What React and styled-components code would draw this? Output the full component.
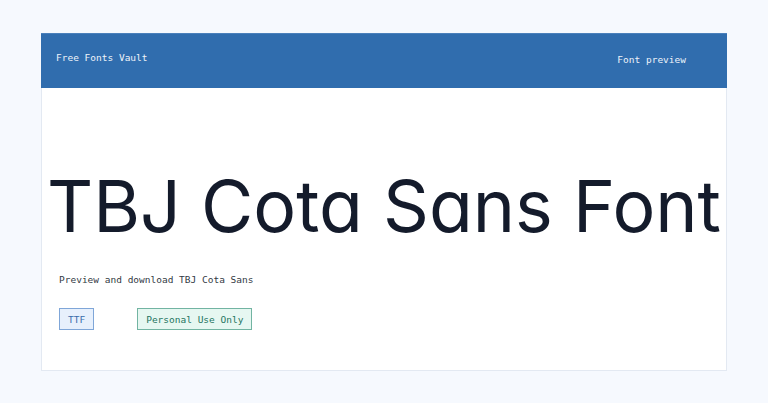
import React from "react";
import styled, { createGlobalStyle } from "styled-components";

const Global = createGlobalStyle`
  html, body { margin: 0; padding: 0; background: #f6f9fe; }
  body { font-family: "DejaVu Sans Mono", "Liberation Mono", monospace; }
`;

const Page = styled.div`
  padding: 33px 41px 0 41px;
`;

const Card = styled.div`
  background: #ffffff;
  border: 1px solid #e3e9f2;
  border-top: none;
  width: 686px;
  box-sizing: border-box;
`;

const Header = styled.header`
  height: 55px;
  box-sizing: border-box;
  background: #306dae;
  border-top: 1px solid #4a80bb;
  margin: 0 -1px;
  display: flex;
  align-items: center;
  justify-content: space-between;
  padding: 0 41px 4px 15px;
`;

const Brand = styled.div`
  color: #eef3fa;
  font-size: 9.5px;
  line-height: 12px;
  margin-bottom: 2px;
`;

const Nav = styled.nav`
  color: #eef3fa;
  font-size: 9.5px;
  line-height: 12px;
  margin-top: 1px;
`;

const Body = styled.main`
  padding: 82px 0 40px 0;
`;

const Title = styled.h1`
  margin: 0;
  text-align: center;
  font-family: "Inter", "Noto Sans", sans-serif;
  font-feature-settings: "cv11" 1;
  font-weight: 400;
  font-size: 71.6px;
  line-height: 72px;
  color: #141b2b;
  white-space: nowrap;
  letter-spacing: 0;
`;

const Subtitle = styled.p`
  margin: 32px 0 0 17px;
  font-size: 9.5px;
  line-height: 12px;
  color: #333a44;
`;

const Badges = styled.div`
  display: flex;
  gap: 43px;
  margin: 22px 0 0 17px;
`;

const Badge = styled.span`
  display: inline-flex;
  align-items: center;
  height: 22px;
  box-sizing: border-box;
  padding: 0 8px;
  font-size: 9.5px;
  border: 1px solid ${(p) => p.$border};
  background: ${(p) => p.$bg};
  color: ${(p) => p.$fg};
`;

export default function App() {
  return (
    <>
      <Global />
      <Page>
        <Card>
          <Header>
            <Brand>Free Fonts Vault</Brand>
            <Nav>Font preview</Nav>
          </Header>
          <Body>
            <Title>TBJ Cota Sans Font</Title>
            <Subtitle>Preview and download TBJ Cota Sans</Subtitle>
            <Badges>
              <Badge $bg="#e7f0fc" $border="#7fa6d8" $fg="#3a6cab">TTF</Badge>
              <Badge $bg="#e6f7f1" $border="#72b4a2" $fg="#1e7560">Personal Use Only</Badge>
            </Badges>
          </Body>
        </Card>
      </Page>
    </>
  );
}
